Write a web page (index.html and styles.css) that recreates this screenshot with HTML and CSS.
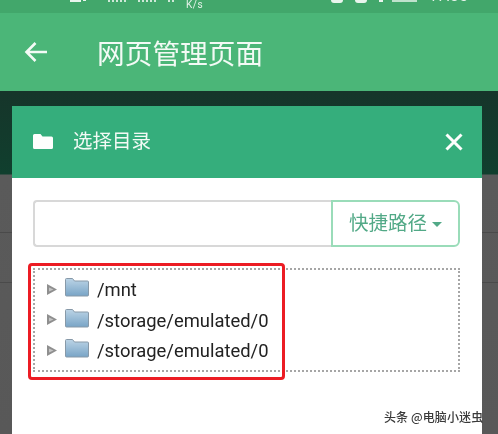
FILE: index.html
```html
<!DOCTYPE html>
<html lang="zh">
<head>
<meta charset="utf-8">
<title>网页管理页面</title>
<link rel="stylesheet" href="styles.css">
</head>
<body>
<div class="screen">
  <div class="status">
    <div class="status-group">
      <i class="sb sb-a"></i><i class="sb sb-b"></i>
      <i class="sb sb-signal"></i>
      <i class="sb sb-signal"></i>
      <i class="sb sb-wifi"></i>
      <span class="speed">K/s</span>
    </div>
    <div class="status-group status-right">
      <i class="sb sb-round"></i>
      <i class="sb sb-round"></i>
      <i class="sb sb-dot"></i>
      <i class="sb sb-battery"></i>
      <span class="clock">17:35</span>
    </div>
  </div>
  <header class="appbar">
    <svg class="back" viewBox="0 0 24 22" width="24" height="22"><path d="M23 11H2.5M11.5 2 2.5 11l9 9" fill="none" stroke="#f4fbf6" stroke-width="2.6"/></svg>
    <h1 class="appbar-title">网页管理页面</h1>
  </header>
  <main class="backdrop">
    <section class="dialog">
      <div class="dialog-head">
        <svg class="head-folder" viewBox="0 0 20 15" width="20" height="15"><path d="M1.5 0h6l2 2.500h9A1.500 1.500 0 0 1 20 4v9.500a1.500 1.500 0 0 1-1.500 1.500h-17A1.500 1.500 0 0 1 0 13.500v-12A1.500 1.500 0 0 1 1.500 0z" fill="#fdfefd"/></svg>
        <h2 class="dialog-title">选择目录</h2>
        <svg class="close" viewBox="0 0 18 18" width="18" height="18"><path d="M1.500 1.500l15 15M16.500 1.500l-15 15" stroke="#fdfefd" stroke-width="3" fill="none"/></svg>
      </div>
      <div class="dialog-body">
        <div class="input-group">
          <div class="path-input"></div>
          <div class="quick-btn">快捷路径<i class="caret"></i></div>
        </div>
        <div class="tree-wrap">
          <ul class="tree">
            <li class="row">
              <svg class="tri" viewBox="0 0 10 11" width="10" height="11"><path d="M0 0l10 5.500L0 11z" fill="#8f8f8f"/><path d="M2 3.500 6.500 5.500 2 7.500z" fill="#c4c4c4"/></svg>
              <svg class="folder" viewBox="0 0 24 19" width="24" height="19"><defs><linearGradient id="fg" x1="0" y1="0" x2="0" y2="1"><stop offset="0" stop-color="#bcd4e6"/><stop offset="1" stop-color="#78a4c6"/></linearGradient></defs><path d="M1.500.5h6l2 2.500h13a1 1 0 0 1 1 1v13a1 1 0 0 1-1 1h-21a1 1 0 0 1-1-1v-15.500a1 1 0 0 1 1-1z" fill="url(#fg)" stroke="#8799a8"/></svg>
              <span class="label">/mnt</span>
            </li>
            <li class="row">
              <svg class="tri" viewBox="0 0 10 11" width="10" height="11"><path d="M0 0l10 5.500L0 11z" fill="#8f8f8f"/><path d="M2 3.500 6.500 5.500 2 7.500z" fill="#c4c4c4"/></svg>
              <svg class="folder" viewBox="0 0 24 19" width="24" height="19"><path d="M1.500.5h6l2 2.500h13a1 1 0 0 1 1 1v13a1 1 0 0 1-1 1h-21a1 1 0 0 1-1-1v-15.500a1 1 0 0 1 1-1z" fill="url(#fg)" stroke="#8799a8"/></svg>
              <span class="label">/storage/emulated/0</span>
            </li>
            <li class="row">
              <svg class="tri" viewBox="0 0 10 11" width="10" height="11"><path d="M0 0l10 5.500L0 11z" fill="#8f8f8f"/><path d="M2 3.500 6.500 5.500 2 7.500z" fill="#c4c4c4"/></svg>
              <svg class="folder" viewBox="0 0 24 19" width="24" height="19"><path d="M1.500.5h6l2 2.500h13a1 1 0 0 1 1 1v13a1 1 0 0 1-1 1h-21a1 1 0 0 1-1-1v-15.500a1 1 0 0 1 1-1z" fill="url(#fg)" stroke="#8799a8"/></svg>
              <span class="label">/storage/emulated/0</span>
            </li>
          </ul>
          <div class="highlight"></div>
        </div>
      </div>
    </section>
  </main>
  <div class="watermark">头条 @电脑小迷虫</div>
</div>
</body>
</html>
```

FILE: styles.css
```css
* { box-sizing: border-box; }
html, body { margin: 0; padding: 0; }
body { width: 498px; height: 434px; overflow: hidden; background: #555; font-family: "Noto Sans CJK SC", sans-serif; }
.screen { position: relative; width: 498px; height: 434px; display: flex; flex-direction: column; overflow: hidden; filter: blur(0.45px); }

.status { height: 13px; flex: none; background: #42a76b; display: flex; justify-content: space-between; padding: 0 30px 0 70px; overflow: hidden; color: #e6f3ea; }
.status-group { display: flex; align-items: flex-start; }
.sb { display: block; background: #e9f5ed; }
.sb-a { width: 11px; height: 2px; }
.sb-b { width: 3px; height: 1px; margin-left: 2px; margin-right: 22px; }
.sb-signal { width: 18px; height: 2px; margin-right: 12px; background: repeating-linear-gradient(90deg, #cfe9d8 0 2px, #42a76b 2px 4px); }
.sb-wifi { width: 8px; height: 2px; margin-right: 10px; background: repeating-linear-gradient(90deg, #cfe9d8 0 2px, #42a76b 2px 4px); }
.speed { font: 10px/9px "Roboto", sans-serif; letter-spacing: .5px; }
.sb-round { width: 12px; height: 3px; margin-right: 12px; border-radius: 0 0 6px 6px; }
.sb-dot { width: 4px; height: 2px; margin-right: 9px; }
.sb-battery { width: 25px; height: 2px; margin-right: 12px; background: #bfe2cc; }
.clock { font: 15px/15px "Roboto", sans-serif; margin-top: -11px; letter-spacing: .4px; }

.appbar { height: 78px; flex: none; background: #4bb678; display: flex; align-items: center; padding: 0 0 0 24px; }
.back { flex: none; margin-top: -1px; }
.appbar-title { margin: 0 0 0 49px; font-size: 27.7px; font-weight: 400; line-height: 36px; color: #f3faf5; }

.backdrop { flex: 1; padding: 15px 16px 0 12px; min-height: 0;
  background:
    linear-gradient(#4a4a4a, #4a4a4a) 0 141px / 100% 1px no-repeat,
    linear-gradient(#4a4a4a, #4a4a4a) 0 191px / 100% 1px no-repeat,
    linear-gradient(180deg, #16352a 0, #103f2e 83px, #5a5a5a 84px, #585858 100%); }

.dialog { height: 328px; background: #fff; display: flex; flex-direction: column; }
.dialog-head { height: 72px; flex: none; display: flex; align-items: center; padding: 0 19px 0 21px; background: #35ae7c; }
.head-folder { flex: none; margin-top: -2px; }
.dialog-title { margin: -4px 0 0 20px; flex: 1; font-size: 19.5px; font-weight: 400; line-height: 26px; color: #f3faf5; }
.close { flex: none; }

.dialog-body { padding: 22px 22px 0 21px; }
.input-group { display: flex; height: 47px; }
.path-input { width: 298px; flex: none; border: 2px solid #d8d8d8; border-right: 0; border-radius: 4px 0 0 4px; }
.quick-btn { flex: 1; border: 2px solid #9adcb9; border-radius: 0 6px 6px 0; display: flex; align-items: center; padding: 0 0 3px 16px; font-size: 19.5px; line-height: 26px; color: #52a987; }
.caret { width: 0; height: 0; margin-left: 5px; margin-top: 5px; border-style: solid; border-width: 5px 5px 0; border-color: #52a987 transparent transparent; }

.tree-wrap { position: relative; margin-top: 21px; }
.tree { list-style: none; margin: 0; height: 104px; padding: 5px 0 0 12px; border: 2px dotted #a6a6a6; }
.row { display: flex; align-items: center; height: 30.5px; }
.tri { flex: none; margin-top: -2px; }
.folder { flex: none; margin-left: 8px; margin-top: -5px; }
.label { margin-left: 8px; font: 18.4px/24px "Roboto", sans-serif; color: #222; }
.highlight { position: absolute; left: -5px; top: -5px; width: 257px; height: 117px; border: 3.5px solid #ec1c24; border-radius: 4px; }

.watermark { position: absolute; left: 384px; top: 408px; font-size: 12px; font-weight: 500; letter-spacing: .1px; line-height: 18px; color: #3a3a3a; white-space: nowrap; }
```
